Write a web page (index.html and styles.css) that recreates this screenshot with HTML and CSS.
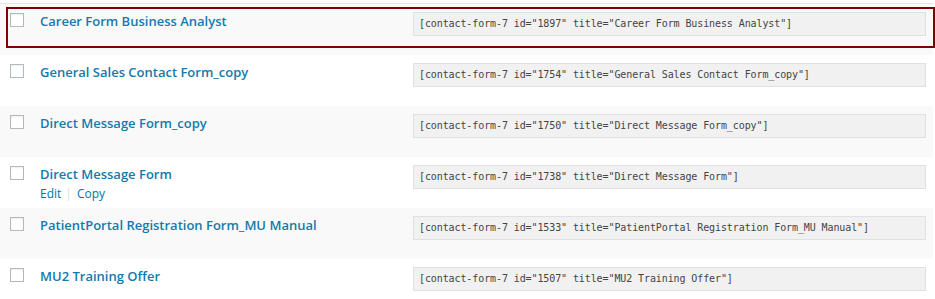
FILE: index.html
```html
<!DOCTYPE html>
<html>
<head>
<meta charset="UTF-8">
<title>Contact Forms</title>
<link rel="stylesheet" href="styles.css">
</head>
<body>
<div class="list">
  <div class="row alt marked">
    <div class="check"><span class="box"></span></div>
    <div class="title">
      <a class="name">Career Form Business Analyst</a>
    </div>
    <div class="code"><span class="shortcode">[contact-form-7 id="1897" title="Career Form Business Analyst"]</span></div>
  </div>
  <div class="row">
    <div class="check"><span class="box"></span></div>
    <div class="title">
      <a class="name">General Sales Contact Form_copy</a>
    </div>
    <div class="code"><span class="shortcode">[contact-form-7 id="1754" title="General Sales Contact Form_copy"]</span></div>
  </div>
  <div class="row alt">
    <div class="check"><span class="box"></span></div>
    <div class="title">
      <a class="name">Direct Message Form_copy</a>
    </div>
    <div class="code"><span class="shortcode">[contact-form-7 id="1750" title="Direct Message Form_copy"]</span></div>
  </div>
  <div class="row">
    <div class="check"><span class="box"></span></div>
    <div class="title">
      <a class="name">Direct Message Form</a>
      <div class="actions"><a>Edit</a><span class="sep">|</span><a>Copy</a></div>
    </div>
    <div class="code"><span class="shortcode">[contact-form-7 id="1738" title="Direct Message Form"]</span></div>
  </div>
  <div class="row alt">
    <div class="check"><span class="box"></span></div>
    <div class="title">
      <a class="name">PatientPortal Registration Form_MU Manual</a>
    </div>
    <div class="code"><span class="shortcode">[contact-form-7 id="1533" title="PatientPortal Registration Form_MU Manual"]</span></div>
  </div>
  <div class="row">
    <div class="check"><span class="box"></span></div>
    <div class="title">
      <a class="name">MU2 Training Offer</a>
    </div>
    <div class="code"><span class="shortcode">[contact-form-7 id="1507" title="MU2 Training Offer"]</span></div>
  </div>
</div>
</body>
</html>
```

FILE: styles.css
```css
* {
  margin: 0;
  padding: 0;
  box-sizing: border-box;
}

body {
  background: #fff;
  font-family: "Open Sans", "Noto Sans", sans-serif;
  color: #444;
}

.list {
  width: 933px;
  margin-top: 3px;
  border-top: 1px solid #e5e5e5;
}

.row {
  position: relative;
  display: flex;
  height: 51px;
  background: #fff;
}

.row.alt {
  background: #f9f9f9;
}

.marked::after {
  content: "";
  position: absolute;
  left: 6px;
  top: 3px;
  width: 925px;
  height: 37px;
  border: 2px solid #7f0000;
}

.check {
  width: 40px;
  padding: 9px 0 0 10px;
}

.box {
  display: block;
  width: 14px;
  height: 14px;
  border: 1px solid #b4b9be;
  background: #fff;
  box-shadow: inset 0 1px 2px rgba(0, 0, 0, 0.07);
}

.title {
  width: 373px;
  padding-top: 7px;
}

.name {
  display: block;
  font-size: 13px;
  font-weight: 600;
  line-height: 20px;
  color: #1479ad;
}

.actions {
  margin-top: 1px;
  font-size: 12px;
  line-height: 18px;
  color: #0073aa;
}

.sep {
  color: #ddd;
  margin: 0 5px 0 4px;
}

.code {
  padding-top: 8px;
}

.shortcode {
  display: block;
  width: 513px;
  height: 24px;
  padding-left: 5px;
  background: #f1f1f1;
  border: 1px solid #e0e0e0;
  font-family: "DejaVu Sans Mono", monospace;
  font-size: 10px;
  letter-spacing: -0.1px;
  line-height: 22px;
  color: #444;
  white-space: nowrap;
}
```
